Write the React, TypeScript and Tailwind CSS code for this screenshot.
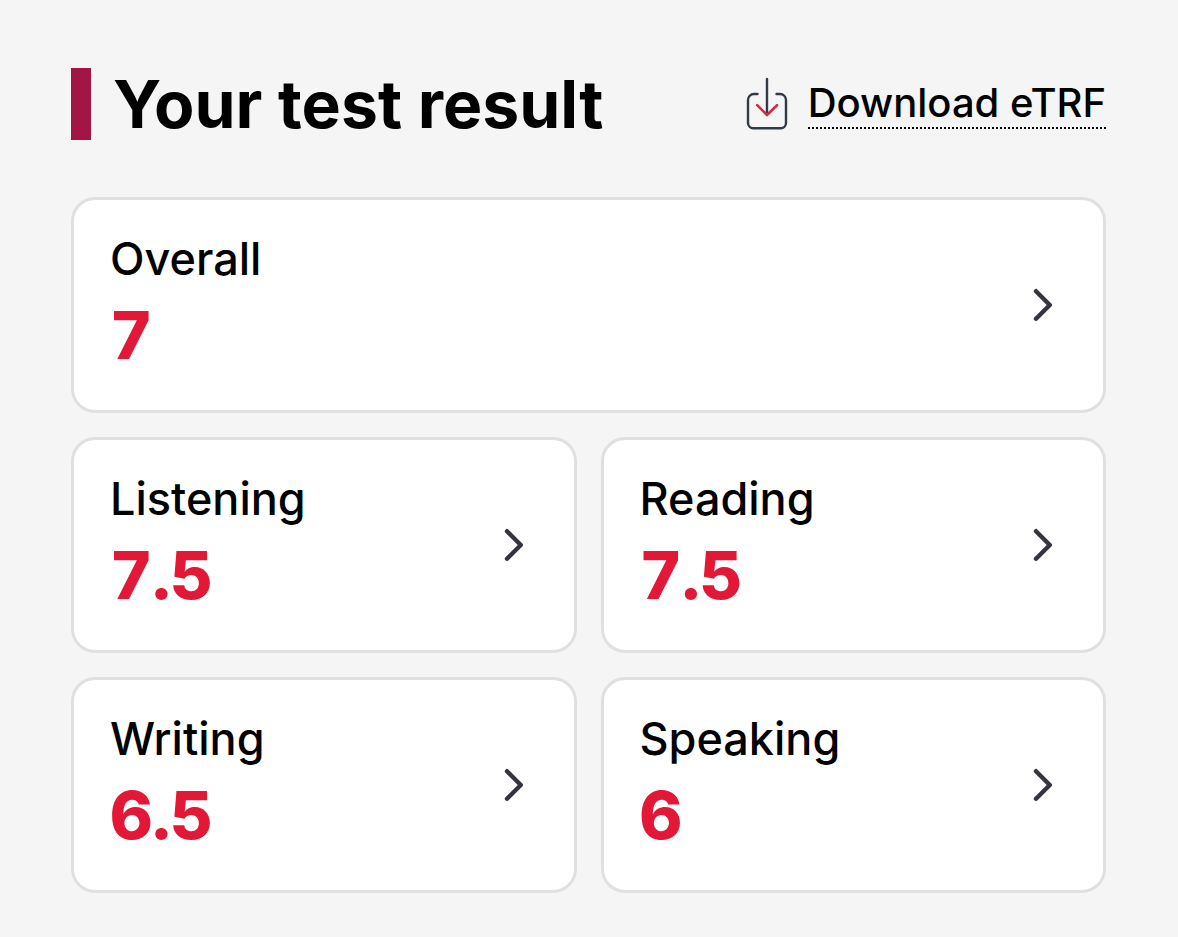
type Result = {
  label: string;
  score: string;
  wide?: boolean;
};

const results: Result[] = [
  { label: 'Overall', score: '7', wide: true },
  { label: 'Listening', score: '7.5' },
  { label: 'Reading', score: '7.5' },
  { label: 'Writing', score: '6.5' },
  { label: 'Speaking', score: '6' },
];

function DownloadIcon() {
  return (
    <svg
      viewBox="0 0 42 54"
      fill="none"
      stroke="#343946"
      strokeWidth="2.4"
      strokeLinecap="round"
      strokeLinejoin="round"
      className="h-[54px] w-[42px] shrink-0"
      aria-hidden="true"
    >
      <path d="M11.5 17H8a6 6 0 0 0-6 6v23a5.2 5.2 0 0 0 5.2 5.2h27.6A5.2 5.2 0 0 0 40 46V23a6 6 0 0 0-6-6h-3.5" />
      <path d="M21 2v35" />
      <path d="M11.2 28.2 21 38l10-9.8" stroke="#cf2a49" strokeWidth="2.6" />
    </svg>
  );
}

function ChevronIcon() {
  return (
    <svg
      viewBox="0 0 20 34"
      fill="none"
      stroke="#33343f"
      strokeWidth="4.4"
      strokeLinecap="round"
      strokeLinejoin="round"
      className="h-[34px] w-5 shrink-0"
      aria-hidden="true"
    >
      <path d="M3 3.2 16.8 17 3 30.8" />
    </svg>
  );
}

function ResultCard({ label, score, wide }: Result) {
  return (
    <button
      type="button"
      className={`flex h-[216px] items-center justify-between rounded-3xl border-3 border-[#e0e0e0] bg-white pr-[50px] pl-9 text-left ${
        wide ? 'col-span-2' : ''
      }`}
    >
      <span className="flex flex-col gap-1">
        <span className="text-[45px] leading-[56px] font-medium text-black">{label}</span>
        <span className="text-[66px] leading-[88px] font-extrabold text-[#e31837] tabular-nums">
          {score}
        </span>
      </span>
      <ChevronIcon />
    </button>
  );
}

export default function App() {
  return (
    <main className="min-h-screen bg-[#f5f5f5] pt-[68px] pr-[72px] pb-11 pl-[71px] font-[Inter,sans-serif]">
      <header className="mb-[57px] flex h-[72px] items-center justify-between">
        <h1 className="border-l-20 border-[#a31545] pl-[22px] text-[66px] leading-[72px] font-bold whitespace-nowrap text-black">
          Your test result
        </h1>
        <a href="#download" className="flex items-center gap-5 text-black">
          <DownloadIcon />
          <span className="border-b-2 border-dotted border-black text-[40px] leading-[48px] font-medium whitespace-nowrap">
            Download eTRF
          </span>
        </a>
      </header>
      <div className="grid grid-cols-2 gap-6">
        {results.map((result) => (
          <ResultCard key={result.label} {...result} />
        ))}
      </div>
    </main>
  );
}
